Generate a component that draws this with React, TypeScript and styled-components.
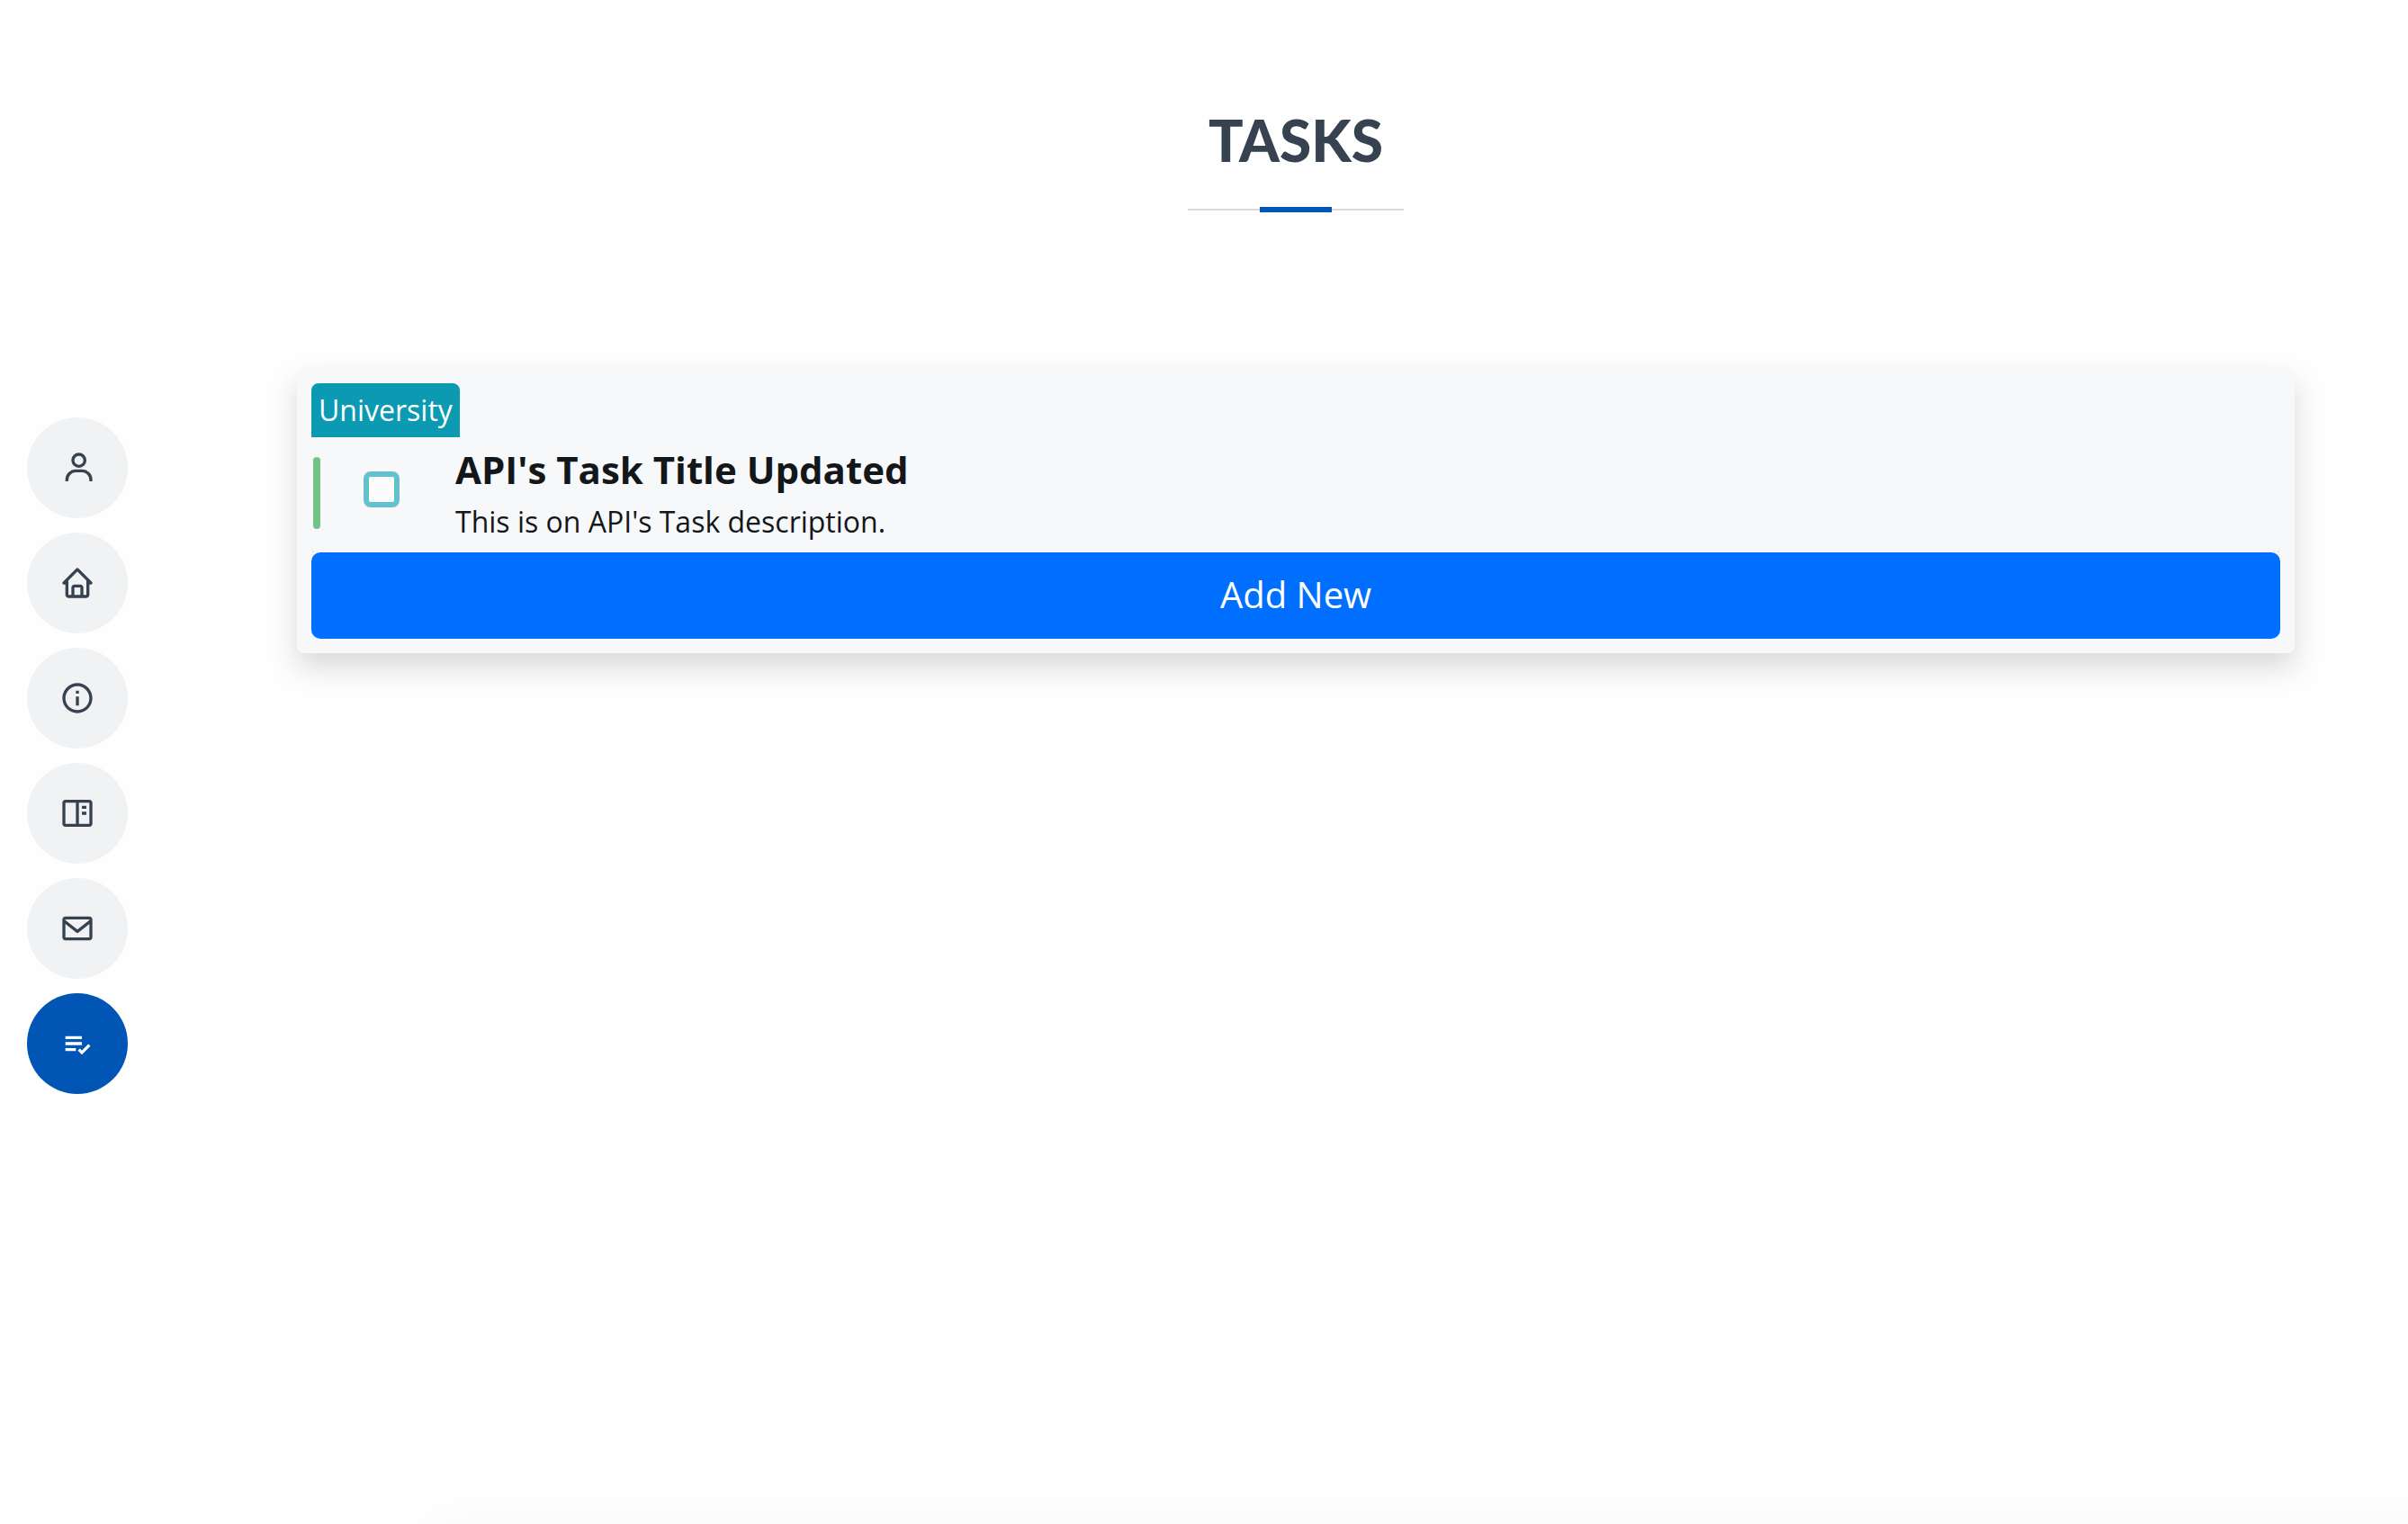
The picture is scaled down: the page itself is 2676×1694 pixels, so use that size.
import { useState } from "react";
import type { ComponentType } from "react";
import styled, { createGlobalStyle } from "styled-components";
import { BiHome, BiInfoCircle, BiBookContent, BiEnvelope, BiListCheck } from "react-icons/bi";

const GlobalStyle = createGlobalStyle`
  *, *::before, *::after { box-sizing: border-box; }
  body {
    margin: 0;
    background: #fefefe;
    color: #14171a;
    font-family: "Open Sans", "Noto Sans", sans-serif;
    font-size: 32px;
    line-height: 48px;
  }
`;

const Page = styled.div`
  display: flex;
  height: 100vh;
  overflow: hidden;
`;

const Sidebar = styled.nav`
  flex: none;
  width: 204px;
  padding: 2px 0 0 30px;
  display: flex;
  flex-direction: column;
  justify-content: center;
`;

const NavList = styled.ul`
  list-style: none;
  margin: 0;
  padding: 0;
`;

const NavItem = styled.li`
  margin-bottom: 16px;
`;

const NavLink = styled.a<{ $active: boolean }>`
  display: flex;
  align-items: center;
  justify-content: center;
  width: 112px;
  height: 112px;
  border-radius: 50%;
  background: ${(p) => (p.$active ? "#0055b5" : "#f1f2f4")};
  color: ${(p) => (p.$active ? "#ffffff" : "#36424f")};

  svg {
    width: 40px;
    height: 40px;
  }
`;

const Main = styled.main`
  flex: 1;
  min-width: 0;
  display: flex;
  flex-direction: column;
`;

const Container = styled.section`
  flex: 1;
  width: 100%;
  max-width: 2280px;
  margin: 0 auto;
  padding: 118px 30px 0;
`;

const TitleBlock = styled.header`
  display: flex;
  flex-direction: column;
  align-items: center;
  margin-bottom: 172px;
`;

const Title = styled.h1`
  margin: 0 0 36px;
  font-family: Lato, "Open Sans", sans-serif;
  font-size: 64px;
  line-height: 76px;
  font-weight: 900;
  text-transform: uppercase;
  color: #36424f;
`;

const Rule = styled.div`
  display: flex;
  justify-content: center;
  align-items: center;
  width: 240px;
  height: 6px;
  background: linear-gradient(#dadada, #dadada) center / 100% 2px no-repeat;
`;

const RuleAccent = styled.span`
  width: 80px;
  height: 6px;
  background: #0055b5;
`;

const Card = styled.div`
  padding: 16px;
  border-radius: 8px;
  background: #f7f8fa;
  box-shadow: 0 16px 32px rgba(0, 0, 0, 0.15);
`;

const Group = styled.div`
  padding-top: 2px;
  overflow: hidden;
`;

const Category = styled.div`
  display: flex;
  height: 56px;
`;

const CategoryTag = styled.span`
  flex: none;
  height: 60px;
  padding: 6px 8px;
  border-radius: 8px 8px 0 0;
  background: #0b9ab2;
  color: #ffffff;
  z-index: 1;
`;

const TaskRow = styled.div`
  display: flex;
  height: 132px;
  padding-left: 2px;
  border-radius: 8px;
  background: #f7f8fa;
  box-shadow: 0 4px 8px rgba(0, 0, 0, 0.075);
`;

const Priority = styled.span`
  width: 8px;
  height: 80px;
  margin-top: 26px;
  border-radius: 4px;
  background: #73c382;
`;

const Check = styled.input`
  appearance: none;
  width: 40px;
  height: 40px;
  margin: 42px 62px 0 48px;
  border: 6px solid #63c1ce;
  border-radius: 8px;
  background: #fcfcfd;

  &:checked { background: #63c1ce; }
`;

const TaskText = styled.label`
  display: flex;
  flex-direction: column;
  gap: 4px;
  padding-top: 10px;
`;

const TaskTitle = styled.strong`
  font-size: 42px;
  line-height: 60px;
  font-weight: 700;
`;

const TaskDescription = styled.span`
  font-size: 32px;
`;

const AddButton = styled.button`
  display: block;
  width: 100%;
  height: 96px;
  padding: 0 0 2px;
  border: 0;
  border-radius: 10px;
  background: #006fff;
  color: #ffffff;
  font-family: inherit;
  font-size: 40px;
  line-height: 60px;
`;

const Footer = styled.footer`
  flex: none;
  height: 40px;
  margin: 0 -200px -40px 280px;
  box-shadow: 0 10px 60px rgba(0, 0, 0, 0.04);
`;

const UserIcon = () => (
  <svg viewBox="-1 0 24 24" fill="currentColor" aria-hidden="true">
    <path d="M12 2a5 5 0 1 0 5 5 5 5 0 0 0-5-5zm0 8a3 3 0 1 1 3-3 3 3 0 0 1-3 3zm9 11v-1a7 7 0 0 0-7-7h-4a7 7 0 0 0-7 7v1h2v-1a5 5 0 0 1 5-5h4a5 5 0 0 1 5 5v1z" />
  </svg>
);

const links: { label: string; icon: ComponentType; href: string }[] = [
  { label: "Profile", icon: UserIcon, href: "#profile" },
  { label: "Home", icon: BiHome, href: "#home" },
  { label: "About", icon: BiInfoCircle, href: "#about" },
  { label: "Contents", icon: BiBookContent, href: "#contents" },
  { label: "Contact", icon: BiEnvelope, href: "#contact" },
  { label: "Tasks", icon: BiListCheck, href: "#tasks" },
];

export default function App() {
  const [done, setDone] = useState(false);
  return (
    <>
      <GlobalStyle />
      <Page>
        <Sidebar aria-label="Sections">
          <NavList>
            {links.map(({ label, icon: Icon, href }) => (
              <NavItem key={label}>
                <NavLink href={href} aria-label={label} $active={label === "Tasks"}>
                  <Icon />
                </NavLink>
              </NavItem>
            ))}
          </NavList>
        </Sidebar>
        <Main>
          <Container id="tasks">
            <TitleBlock>
              <Title>Tasks</Title>
              <Rule>
                <RuleAccent />
              </Rule>
            </TitleBlock>
            <Card>
              <Group>
                <Category>
                  <CategoryTag>University</CategoryTag>
                </Category>
                <TaskRow>
                  <Priority />
                  <Check
                    id="task-1"
                    type="checkbox"
                    checked={done}
                    onChange={(e) => setDone(e.target.checked)}
                  />
                  <TaskText htmlFor="task-1">
                    <TaskTitle>API's Task Title Updated</TaskTitle>
                    <TaskDescription>This is on API's Task description.</TaskDescription>
                  </TaskText>
                </TaskRow>
              </Group>
              <AddButton type="button">Add New</AddButton>
            </Card>
          </Container>
          <Footer />
        </Main>
      </Page>
    </>
  );
}
